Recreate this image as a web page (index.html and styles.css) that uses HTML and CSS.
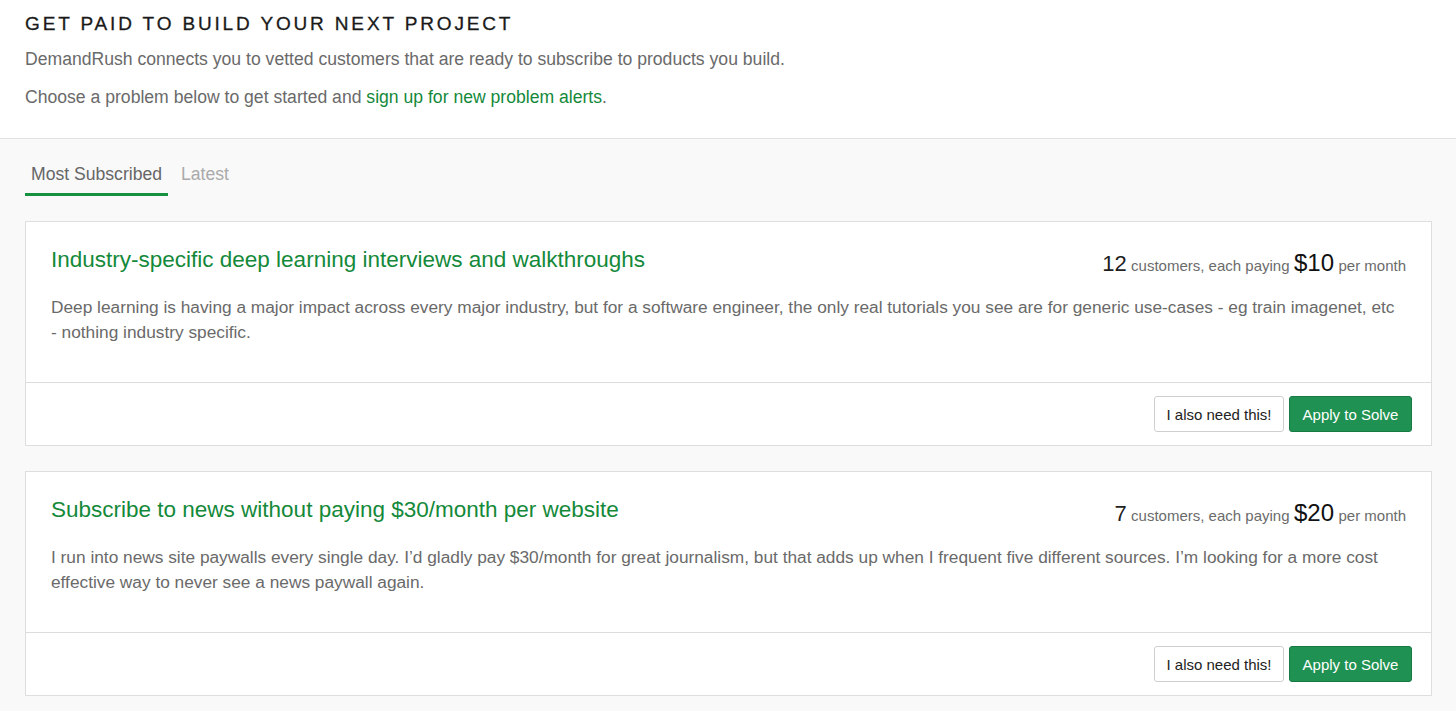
FILE: index.html
```html
<!DOCTYPE html>
<html>
<head>
<meta charset="utf-8">
<link rel="stylesheet" href="styles.css">
</head>
<body>
<header class="hero">
  <h1 class="hero-title">GET PAID TO BUILD YOUR NEXT PROJECT</h1>
  <p class="hero-text">DemandRush connects you to vetted customers that are ready to subscribe to products you build.</p>
  <p class="hero-text">Choose a problem below to get started and <a class="link" href="#">sign up for new problem alerts</a>.</p>
</header>
<main class="content">
  <nav class="tabs">
    <a class="tab tab-active" href="#">Most Subscribed</a>
    <a class="tab" href="#">Latest</a>
  </nav>
  <section class="card">
    <div class="card-body">
      <div class="card-head">
        <h2 class="card-title">Industry-specific deep learning interviews and walkthroughs</h2>
        <div class="stats"><span class="stat-num">12</span> <span class="stat-label">customers, each paying</span> <span class="stat-price">$10</span> <span class="stat-label">per month</span></div>
      </div>
      <p class="card-desc">Deep learning is having a major impact across every major industry, but for a software engineer, the only real tutorials you see are for generic use-cases - eg train imagenet, etc <span class="nowrap">- nothing</span> industry specific.</p>
    </div>
    <div class="card-foot">
      <button class="btn btn-default">I also need this!</button>
      <button class="btn btn-primary">Apply to Solve</button>
    </div>
  </section>
  <section class="card">
    <div class="card-body">
      <div class="card-head">
        <h2 class="card-title">Subscribe to news without paying $30/month per website</h2>
        <div class="stats"><span class="stat-num">7</span> <span class="stat-label">customers, each paying</span> <span class="stat-price">$20</span> <span class="stat-label">per month</span></div>
      </div>
      <p class="card-desc">I run into news site paywalls every single day. I’d gladly pay $30/month for great journalism, but that adds up when I frequent five different sources. I’m looking for a more cost effective way to never see a news paywall again.</p>
    </div>
    <div class="card-foot">
      <button class="btn btn-default">I also need this!</button>
      <button class="btn btn-primary">Apply to Solve</button>
    </div>
  </section>
</main>
</body>
</html>
```
FILE: styles.css
```css
* { box-sizing: border-box; }
html, body { margin: 0; padding: 0; }
body {
  font-family: "Liberation Sans", Arial, sans-serif;
  background: #f9f9f9;
  color: #666;
  overflow: hidden;
}
.hero {
  background: #fff;
  border-bottom: 1px solid #e2e2e2;
  padding: 12px 25px 0;
  height: 139px;
}
.hero-title {
  margin: 0;
  font-size: 19px;
  font-weight: 400;
  letter-spacing: 2.85px;
  color: #1a1a1a;
  line-height: 24px;
  -webkit-text-stroke: 0.3px #1a1a1a;
}
.hero-text {
  margin: 10px 0 0;
  font-size: 17.6px;
  line-height: 26px;
  color: #6a6a6a;
}
.hero-text + .hero-text { margin-top: 12px; }
.link { color: #14893a; text-decoration: none; }
.content {
  padding: 20px 24px 0 25px;
}
.tabs {
  display: flex;
  margin-bottom: 25px;
}
.tab {
  font-size: 17.6px;
  color: #aaa;
  text-decoration: none;
  padding: 4px 6px 8px;
  line-height: 22px;
  border-bottom: 3px solid transparent;
}
.tab-active {
  color: #666;
  border-bottom-color: #16913f;
  margin-right: 7px;
}
.card {
  background: #fff;
  border: 1px solid #dedede;
  margin-bottom: 25px;
}
.card-body {
  padding: 24px 25px 37px;
  border-bottom: 1px solid #dcdcdc;
}
.card-head {
  display: flex;
  justify-content: space-between;
  align-items: flex-start;
  height: 28px;
}
.card-title {
  margin: 0;
  font-size: 22.5px;
  font-weight: 400;
  color: #14893a;
  line-height: 28px;
}
.stats {
  white-space: nowrap;
  color: #222;
  padding-top: 3px;
  line-height: 28px;
}
.stat-num { font-size: 22px; color: #1f1f1f; }
.stat-label { font-size: 15px; color: #6b6b6b; }
.stat-price { font-size: 24px; color: #111; }
.card-desc {
  margin: 21px 0 0;
  font-size: 17.3px;
  line-height: 25px;
  color: #6a6a6a;
}
.nowrap { white-space: nowrap; }
.card-foot {
  display: flex;
  justify-content: flex-end;
  gap: 5px;
  padding: 13px 19px 13px;
}
.btn {
  font-family: "Liberation Sans", Arial, sans-serif;
  font-size: 15px;
  height: 36px;
  padding: 0 10px;
  border-radius: 3px;
  cursor: pointer;
}
.btn-default {
  background: #fff;
  color: #222;
  border: 1px solid #cfcfcf;
  width: 130px;
}
.btn-primary {
  background: #1f9152;
  color: #fff;
  border: 1px solid #187a43;
  width: 123px;
}
```
